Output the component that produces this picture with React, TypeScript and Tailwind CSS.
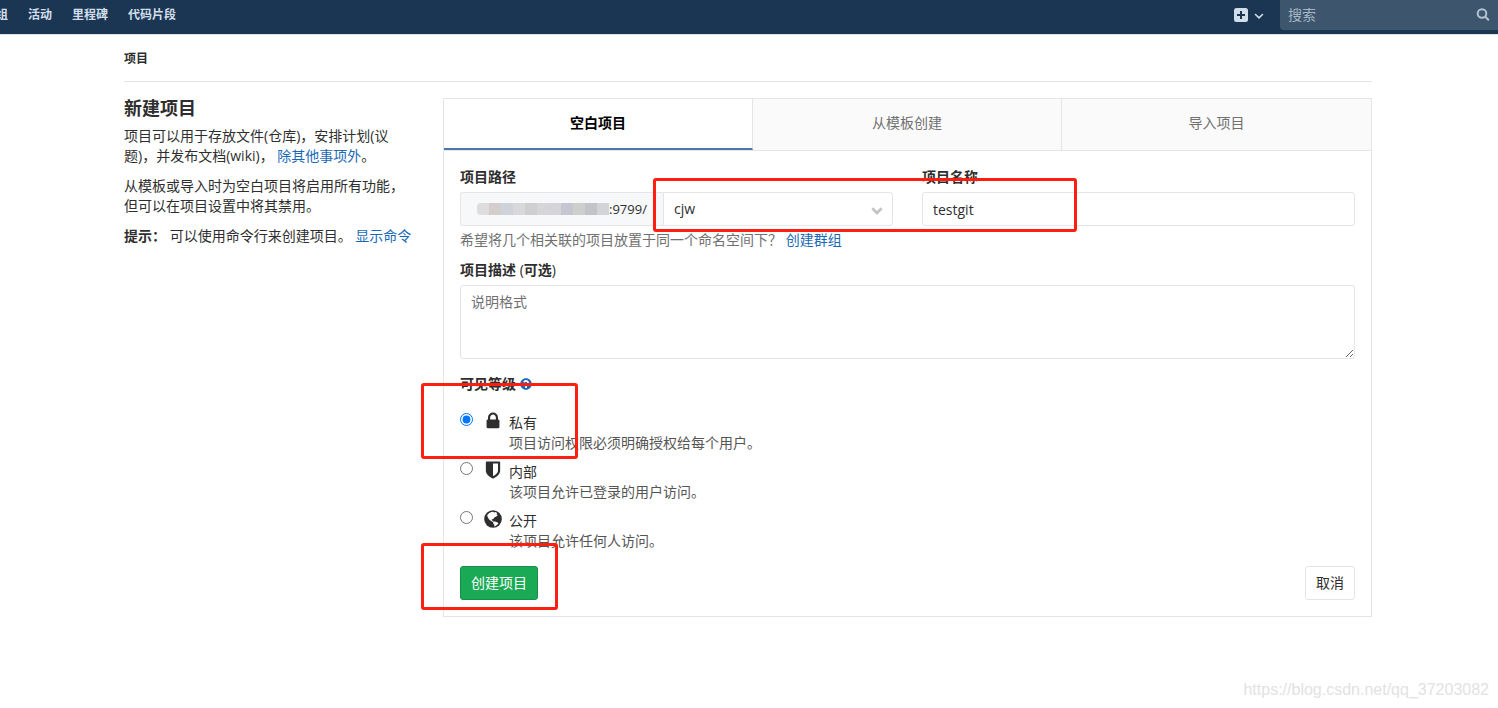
import React, { useState } from "react";
import { FaQuestionCircle } from "react-icons/fa";

const navItems = ["群组", "活动", "里程碑", "代码片段"];
const tabs = ["空白项目", "从模板创建", "导入项目"];

function LockIcon() {
  return (
    <svg viewBox="0 0 1792 1792" className="h-5 w-5" fill="currentColor" aria-hidden="true">
      <path d="M640 768h512v-192q0-106-75-181t-181-75-181 75-75 181v192zm832 96v576q0 40-28 68t-68 28h-960q-40 0-68-28t-28-68v-576q0-40 28-68t68-28h32v-192q0-184 132-316t316-132 316 132 132 316v192h32q40 0 68 28t28 68z" />
    </svg>
  );
}

function ShieldIcon() {
  return (
    <svg viewBox="0 0 1792 1792" className="h-5 w-5" fill="currentColor" aria-hidden="true">
      <path d="M1344 960v-640h-448v1137q119-63 213-137 235-184 235-360zm192-768v768q0 86-33.5 170.5t-83 150-118 127.5-126.5 103-121 77.5-89.5 49.5-42.5 20q-12 6-26 6t-26-6q-16-7-42.5-20t-89.5-49.5-121-77.5-126.5-103-118-127.5-83-150-33.5-170.5v-768q0-26 19-45t45-19h1152q26 0 45 19t19 45z" />
    </svg>
  );
}

function GlobeIcon() {
  return (
    <svg viewBox="0 0 20 20" className="h-5 w-5" aria-hidden="true">
      <circle cx="10" cy="10" r="8.8" fill="currentColor" />
      <path
        fill="#fff"
        d="M4.300 6 6.200 4 8.500 3l1.400-.3 1.200.8 1.500-.5 1.500.9-.6 1.300 1.300.9-1.500 1.400-1.700.7-1.400 1.700-1.500.6.2 1.100 1.200.2.700 1.200-1.500-.2-1.900-1.300-1.500-1.200-.9-1.900-.6-1zM10.200 12.800l1.900-.4 2 .8 1.300 1-.9 1.400-1.900 1.400-1.400.5.200-1.700-1.200-1.300z"
      />
    </svg>
  );
}

const levels = [
  { id: "private", name: "私有", text: "项目访问权限必须明确授权给每个用户。", Icon: LockIcon },
  { id: "internal", name: "内部", text: "该项目允许已登录的用户访问。", Icon: ShieldIcon },
  { id: "public", name: "公开", text: "该项目允许任何人访问。", Icon: GlobeIcon },
];

function Header() {
  return (
    <header className="flex h-[35px] items-start justify-between overflow-hidden border-b border-[#dfe1e6] bg-[#1b3653]">
      <nav className="-ml-4 flex h-[30px] items-center gap-5 text-xs font-bold text-[#d1deea]">
        {navItems.map((item) => (
          <a key={item} href="#" className="whitespace-nowrap">
            {item}
          </a>
        ))}
      </nav>
      <div className="flex items-center">
        <button type="button" aria-label="新建" className="mr-4 flex h-7 items-center gap-1.5 text-[#d1deea]">
          <svg viewBox="0 0 14 14" className="h-3.5 w-3.5" aria-hidden="true">
            <rect width="14" height="14" rx="2.5" fill="currentColor" />
            <path d="M7 3v8M3 7h8" stroke="#1b3653" strokeWidth="2" />
          </svg>
          <svg viewBox="0 0 10 10" className="h-2.5 w-2.5" fill="none" aria-hidden="true">
            <path d="M1.500 4.500 5 7.800 8.500 4.500" stroke="currentColor" strokeWidth="1.600" strokeLinecap="round" />
          </svg>
        </button>
        <div className="flex h-[30px] w-[218px] items-center rounded-bl bg-[#3d566e] pr-2 pl-2">
          <input
            type="search"
            aria-label="搜索"
            placeholder="搜索"
            className="min-w-0 flex-1 bg-transparent text-sm text-white outline-none placeholder:text-[#a5b5c4]"
          />
          <svg viewBox="0 0 14 14" className="h-3.5 w-3.5 text-[#b4c3d2]" fill="none" aria-hidden="true">
            <circle cx="6" cy="5.500" r="4.300" stroke="currentColor" strokeWidth="2" />
            <path d="m9.300 8.800 3 3" stroke="currentColor" strokeWidth="2" strokeLinecap="round" />
          </svg>
        </div>
      </div>
    </header>
  );
}

function Intro() {
  return (
    <section className="text-sm leading-5">
      <h1 className="mb-2 text-lg leading-5 font-bold">新建项目</h1>
      <p className="mb-2.5">
        项目可以用于存放文件(仓库)，安排计划(议题)，并发布文档(wiki)，{" "}
        <a href="#" className="text-[#1b69b6]">
          除其他事项外
        </a>
        。
      </p>
      <p className="mb-2.5">从模板或导入时为空白项目将启用所有功能，但可以在项目设置中将其禁用。</p>
      <p className="whitespace-nowrap">
        <strong className="font-bold">提示：</strong> 可以使用命令行来创建项目。{" "}
        <a href="#" className="text-[#1b69b6]">
          显示命令
        </a>
      </p>
    </section>
  );
}

function HostPrefix() {
  return (
    <span className="flex w-[203px] shrink-0 items-center rounded-l-[3px] border border-r-0 border-[#e5e5e5] bg-[#f7f8fa] pl-4 text-[13px] text-[#2e2e2e]">
      <span className="flex h-3 w-[132px] overflow-hidden rounded-l" aria-hidden="true">
        <span className="flex-1 bg-[#dedcdc]" />
        <span className="flex-1 bg-[#d3cecb]" />
        <span className="flex-1 bg-[#cfd3d9]" />
        <span className="flex-1 bg-[#d8d8dc]" />
        <span className="flex-1 bg-[#cfcfd0]" />
        <span className="flex-1 bg-[#d6d6d8]" />
        <span className="flex-1 bg-[#d5d5d9]" />
        <span className="flex-1 bg-[#c6c6d0]" />
        <span className="flex-1 bg-[#cecece]" />
        <span className="flex-1 bg-[#c3c4c8]" />
        <span className="flex-1 bg-[#d3d4d6]" />
      </span>
      :9799/
    </span>
  );
}

function ProjectForm() {
  const [level, setLevel] = useState("private");
  return (
    <form className="p-4 text-sm leading-5" onSubmit={(e) => e.preventDefault()}>
      <div className="grid grid-cols-2 gap-x-[29px]">
        <div>
          <label htmlFor="namespace" className="mb-[5px] block font-bold">
            项目路径
          </label>
          <div className="flex h-[34px]">
            <HostPrefix />
            <div className="relative min-w-0 flex-1">
              <select
                id="namespace"
                className="h-full w-full appearance-none rounded-r-[3px] border border-[#e5e5e5] bg-white px-2.5 outline-none"
              >
                <option>cjw</option>
              </select>
              <svg viewBox="0 0 12 8" className="pointer-events-none absolute top-[15px] right-2.5 h-2 w-3" fill="none" aria-hidden="true">
                <path d="M1.300 1.300 6 6l4.700-4.700" stroke="#c4c4c4" strokeWidth="2.800" />
              </svg>
            </div>
          </div>
        </div>
        <div>
          <label htmlFor="name" className="mb-[5px] block font-bold">
            项目名称
          </label>
          <input
            id="name"
            type="text"
            defaultValue="testgit"
            className="h-[34px] w-full rounded-[3px] border border-[#e5e5e5] px-2.5 outline-none"
          />
        </div>
      </div>
      <p className="mt-1 text-[#707070]">
        希望将几个相关联的项目放置于同一个命名空间下？{" "}
        <a href="#" className="text-[#1b69b6]">
          创建群组
        </a>
      </p>
      <label htmlFor="description" className="mt-2.5 mb-[5px] block font-bold">
        项目描述 <span className="font-normal">(</span>可选<span className="font-normal">)</span>
      </label>
      <textarea
        id="description"
        placeholder="说明格式"
        className="block h-[74px] w-full resize-y rounded-[3px] border border-[#e5e5e5] px-2.5 py-1.5 outline-none placeholder:text-[#707070]"
      />
      <fieldset className="mt-[15px]">
        <legend className="flex items-center gap-1 font-bold">
          可见等级
          <a href="#" aria-label="帮助" className="text-[#1b69b6]">
            <FaQuestionCircle className="h-3 w-3" />
          </a>
        </legend>
        <div className="flex flex-col gap-[9px] pt-[19px]">
          {levels.map(({ id, name, text, Icon }) => (
            <div key={id} className="flex items-start">
              <input
                id={id}
                type="radio"
                name="visibility"
                checked={level === id}
                onChange={() => setLevel(id)}
                className="h-[13px] w-[13px]"
              />
              <label htmlFor={id} className="flex pl-2.5">
                <span className="-mt-0.5 mr-1.5">
                  <Icon />
                </span>
                <span>
                  <span className="block">{name}</span>
                  <span className="block text-[#555]">{text}</span>
                </span>
              </label>
            </div>
          ))}
        </div>
      </fieldset>
      <div className="mt-[15px] flex justify-between">
        <button type="submit" className="h-[34px] rounded-[3px] border border-[#168f48] bg-[#1aaa55] px-2.5 text-white">
          创建项目
        </button>
        <button type="button" className="h-[34px] rounded-[3px] border border-[#e5e5e5] bg-white px-2.5">
          取消
        </button>
      </div>
    </form>
  );
}

function Panel() {
  return (
    <section className="relative border border-[#e5e5e5]">
      <div role="tablist" className="grid grid-cols-3 border-b border-[#e5e5e5] text-sm leading-5">
        {tabs.map((tab, i) => (
          <button
            key={tab}
            type="button"
            role="tab"
            aria-selected={i === 0}
            className={
              i === 0
                ? "h-[51px] border-r border-b-2 border-r-[#e5e5e5] border-b-[#4b77a9] pb-0.5 font-bold text-black"
                : "h-[51px] border-r border-[#e5e5e5] bg-[#fafafa] pb-1 text-[#707070] last:border-r-0"
            }
          >
            {tab}
          </button>
        ))}
      </div>
      <ProjectForm />
      <div className="pointer-events-none absolute top-[79px] left-[209px] h-[54px] w-[424px] rounded-[3px] border-3 border-[#ff1f10]" />
      <div className="pointer-events-none absolute top-[284px] -left-[23px] h-[76px] w-[157px] rounded-[3px] border-3 border-[#ff1f10]" />
      <div className="pointer-events-none absolute top-[444px] -left-[23px] h-[67px] w-[137px] rounded-[3px] border-3 border-[#ff1f10]" />
    </section>
  );
}

export default function App() {
  return (
    <div className="relative min-h-screen bg-white font-['Open_Sans','Noto_Sans_CJK_SC',sans-serif] text-[#2e2e2e]">
      <Header />
      <main className="mx-auto max-w-[1282px] pr-[18px] pl-4">
        <nav className="flex h-[47px] items-center border-b border-[#e5e5e5] pt-0.5 text-xs font-bold">
          <a href="#">项目</a>
        </nav>
        <div className="mt-4 grid grid-cols-[288px_1fr] items-start gap-x-[31px]">
          <Intro />
          <Panel />
        </div>
      </main>
      <p className="absolute right-[9px] bottom-2 font-['Liberation_Sans',sans-serif] text-base leading-5 text-[#e2e2e2]">
        https://blog.csdn.net/qq_37203082
      </p>
    </div>
  );
}
